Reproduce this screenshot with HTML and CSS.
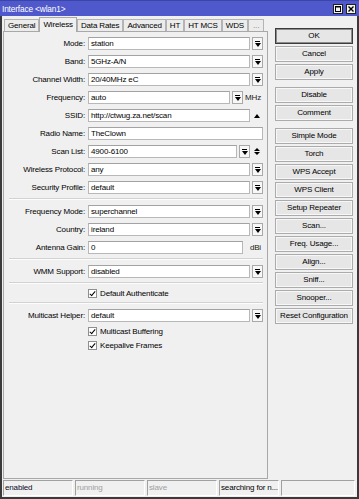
FILE: index.html
```html
<!DOCTYPE html>
<html>
<head>
<meta charset="utf-8">
<title>Interface &lt;wlan1&gt;</title>
<link rel="stylesheet" href="styles.css">
</head>
<body>
<div class="window">
  <div class="titlebar">
    <span class="title">Interface &lt;wlan1&gt;</span>
    <div class="tb-buttons">
      <span class="tb-btn"><svg width="8" height="8" viewBox="0 0 8 8"><rect x="1.5" y="1.5" width="5" height="5" fill="none" stroke="#000" stroke-width="1"/><line x1="1.5" y1="2" x2="6.5" y2="2" stroke="#000" stroke-width="1"/></svg></span>
      <span class="tb-btn"><svg width="8" height="8" viewBox="0 0 8 8"><path d="M1.5 1.5 L6.5 6.5 M6.5 1.5 L1.5 6.5" stroke="#000" stroke-width="1.4"/></svg></span>
    </div>
  </div>
  <div class="main">
    <div class="left">
      <div class="tabs">
        <span class="tab">General</span>
        <span class="tab active">Wireless</span>
        <span class="tab">Data Rates</span>
        <span class="tab">Advanced</span>
        <span class="tab">HT</span>
        <span class="tab">HT MCS</span>
        <span class="tab">WDS</span>
        <span class="tab more">...</span>
      </div>
      <div class="panel">
        <div class="section">
          <div class="row"><span class="lbl">Mode:</span><div class="field"><span class="input">station</span><span class="dd"></span></div></div>
          <div class="row"><span class="lbl">Band:</span><div class="field"><span class="input">5GHz-A/N</span><span class="dd"></span></div></div>
          <div class="row"><span class="lbl">Channel Width:</span><div class="field"><span class="input">20/40MHz eC</span><span class="dd"></span></div></div>
          <div class="row"><span class="lbl">Frequency:</span><div class="field"><span class="input">auto</span><span class="dd"></span><span class="unit">MHz</span></div></div>
          <div class="row"><span class="lbl">SSID:</span><div class="field"><span class="input">http://ctwug.za.net/scan</span><span class="trail up"></span></div></div>
          <div class="row"><span class="lbl">Radio Name:</span><div class="field"><span class="input">TheClown</span></div></div>
          <div class="row"><span class="lbl">Scan List:</span><div class="field"><span class="input">4900-6100</span><span class="dd"></span><span class="trail updown"></span></div></div>
          <div class="row"><span class="lbl">Wireless Protocol:</span><div class="field"><span class="input">any</span><span class="dd"></span></div></div>
          <div class="row"><span class="lbl">Security Profile:</span><div class="field"><span class="input">default</span><span class="dd"></span></div></div>
        </div>
        <div class="sep"></div>
        <div class="section">
          <div class="row"><span class="lbl">Frequency Mode:</span><div class="field"><span class="input">superchannel</span><span class="dd"></span></div></div>
          <div class="row"><span class="lbl">Country:</span><div class="field"><span class="input">ireland</span><span class="dd"></span></div></div>
          <div class="row"><span class="lbl">Antenna Gain:</span><div class="field"><span class="input">0</span><span class="unit">dBi</span></div></div>
        </div>
        <div class="sep"></div>
        <div class="section">
          <div class="row"><span class="lbl">WMM Support:</span><div class="field"><span class="input">disabled</span><span class="dd"></span></div></div>
        </div>
        <div class="sep"></div>
        <div class="section">
          <div class="row check"><span class="lbl"></span><div class="field"><span class="cb"></span><span class="cb-text">Default Authenticate</span></div></div>
        </div>
        <div class="sep"></div>
        <div class="section">
          <div class="row"><span class="lbl">Multicast Helper:</span><div class="field"><span class="input">default</span><span class="dd"></span></div></div>
          <div class="row check"><span class="lbl"></span><div class="field"><span class="cb"></span><span class="cb-text">Multicast Buffering</span></div></div>
          <div class="row check"><span class="lbl"></span><div class="field"><span class="cb"></span><span class="cb-text">Keepalive Frames</span></div></div>
        </div>
      </div>
    </div>
    <div class="buttons">
      <div class="group">
        <button class="btn default">OK</button>
        <button class="btn">Cancel</button>
        <button class="btn">Apply</button>
      </div>
      <div class="group">
        <button class="btn">Disable</button>
        <button class="btn">Comment</button>
      </div>
      <div class="group">
        <button class="btn">Simple Mode</button>
        <button class="btn">Torch</button>
        <button class="btn">WPS Accept</button>
        <button class="btn">WPS Client</button>
        <button class="btn">Setup Repeater</button>
        <button class="btn">Scan...</button>
        <button class="btn">Freq. Usage...</button>
        <button class="btn">Align...</button>
        <button class="btn">Sniff...</button>
        <button class="btn">Snooper...</button>
        <button class="btn">Reset Configuration</button>
      </div>
    </div>
  </div>
  <div class="statusbar">
    <span class="cell w70 strong">enabled</span>
    <span class="cell w70 dim">running</span>
    <span class="cell w70 dim">slave</span>
    <span class="cell w60">searching for n...</span>
    <span class="cell grow"></span>
  </div>
</div>
</body>
</html>
```
FILE: styles.css
```css
* { box-sizing: border-box; }
html, body { margin: 0; padding: 0; }
body {
  width: 359px;
  height: 499px;
  overflow: hidden;
  background: #f0f0f0;
  font-family: "Liberation Sans", Arial, sans-serif;
  font-size: 8px;
  letter-spacing: -0.15px;
  color: #000;
}
.window {
  width: 359px;
  height: 499px;
  display: flex;
  flex-direction: column;
  border: 2px solid #3a3a3a;
  border-top: 0;
  background: #f0f0f0;
}
.titlebar {
  flex: none;
  height: 16px;
  margin: 0 -2px;
  background: #5059cb;
  border-top: 1px solid #3b45a8;
  color: #fff;
  display: flex;
  align-items: center;
  justify-content: space-between;
  padding: 0 3px 0 2px;
}
.title { line-height: 12px; font-size: 8.3px; }
.tb-buttons { display: flex; gap: 3px; }
.tb-btn {
  width: 10px;
  height: 10px;
  background: #f4f4f4;
  border: 1px solid #202020;
  display: flex;
  align-items: center;
  justify-content: center;
}
.main { flex: 1; display: flex; min-height: 0; }
.left {
  width: 266px;
  padding-left: 1px;
  display: flex;
  flex-direction: column;
}
.tabs {
  height: 15px;
  flex: none;
  display: flex;
  align-items: flex-end;
  padding-left: 1px;
}
.tab {
  height: 12px;
  padding: 0 3px;
  border: 1px solid #b4b4b4;
  border-bottom: 0;
  background: #ececec;
  line-height: 11px;
  white-space: nowrap;
}
.tab.active {
  height: 15px;
  margin-bottom: -1px;
  background: #f0f0f0;
  border-color: #a8a8a8;
  line-height: 13px;
  position: relative;
  z-index: 1;
}
.tab.more { color: #7a7a7a; padding: 0 4px; }
.panel {
  flex: 1;
  border: 1px solid #a8a8a8;
  background: #f0f0f0;
  padding: 5px 4px 0 6px;
}
.section { display: flex; flex-direction: column; gap: 5px; }
.row { display: flex; align-items: center; height: 13px; }
.row.check { height: 9px; }
.lbl {
  flex: none;
  width: 75px;
  margin-right: 3px;
  text-align: right;
  white-space: nowrap;
  line-height: 13px;
}
.field { flex: 1; display: flex; align-items: stretch; height: 100%; }
.input {
  flex: 1;
  min-width: 0;
  background: #fff;
  border: 1px solid #b8b8b8;
  border-top-color: #a2a2a2;
  padding: 0 2px;
  line-height: 11px;
  white-space: nowrap;
  overflow: hidden;
}
.dd {
  flex: none;
  width: 11px;
  margin-left: 2px;
  border: 1px solid #a9a9a9;
  background: #f7f7f7;
  display: flex;
  flex-direction: column;
  align-items: center;
  justify-content: center;
  gap: 1px;
}
.dd::before {
  content: "";
  width: 5px;
  height: 1px;
  background: #000;
}
.dd::after {
  content: "";
  width: 0;
  height: 0;
  border-left: 3px solid transparent;
  border-right: 3px solid transparent;
  border-top: 4px solid #000;
}
.unit {
  flex: none;
  width: 20px;
  padding-right: 2px;
  text-align: right;
  line-height: 13px;
  color: #1a1a1a;
}
.trail {
  flex: none;
  width: 13px;
  display: flex;
  flex-direction: column;
  align-items: center;
  justify-content: center;
  gap: 1px;
}
.trail.up::before {
  content: "";
  border-left: 3px solid transparent;
  border-right: 3px solid transparent;
  border-bottom: 4px solid #000;
}
.trail.updown::before {
  content: "";
  border-left: 3px solid transparent;
  border-right: 3px solid transparent;
  border-bottom: 3px solid #000;
}
.trail.updown::after {
  content: "";
  border-left: 3px solid transparent;
  border-right: 3px solid transparent;
  border-top: 3px solid #000;
}
.sep {
  height: 2px;
  margin: 4px 0 5px -1px;
  border-top: 1px solid #d2d2d2;
  border-bottom: 1px solid #fdfdfd;
}
.row.check .field { align-items: center; }
.cb {
  flex: none;
  width: 9px;
  height: 9px;
  background: #fff;
  border: 1px solid #8e8f8f;
  display: flex;
  align-items: center;
  justify-content: center;
}
.cb::after {
  content: "";
  width: 2px;
  height: 5px;
  margin-top: -2px;
  border: solid #000;
  border-width: 0 1.5px 1.5px 0;
  transform: rotate(40deg);
}
.cb-text { margin-left: 3px; line-height: 11px; white-space: nowrap; }
.buttons {
  flex: 1;
  padding: 12px 4px 0 7px;
  display: flex;
  flex-direction: column;
  gap: 7px;
}
.group { display: flex; flex-direction: column; gap: 2px; }
.btn {
  height: 16px;
  padding: 0;
  margin: 0;
  font: inherit;
  letter-spacing: inherit;
  white-space: nowrap;
  color: #000;
  background: #e6e6e6;
  border: 1px solid #ababab;
  box-shadow: inset 0 0 0 1px #f7f7f7;
  border-radius: 0;
  line-height: 14px;
  text-align: center;
}
.btn.default {
  border-color: #3c3c3c;
  box-shadow: inset 0 0 0 1px #8c8c8c;
}
.statusbar {
  flex: none;
  height: 18px;
  display: flex;
  gap: 2px;
  padding: 1px 2px 1px 1px;
}
.cell {
  height: 16px;
  border: 1px solid;
  border-color: #a0a0a0 #ffffff #ffffff #a0a0a0;
  padding: 0 1px;
  line-height: 14px;
  white-space: nowrap;
  overflow: hidden;
}
.w70 { width: 70px; }
.w60 { width: 60px; }
.grow { flex: 1; }
.strong { color: #0a0a2a; }
.dim { color: #a0a0a0; }
```
